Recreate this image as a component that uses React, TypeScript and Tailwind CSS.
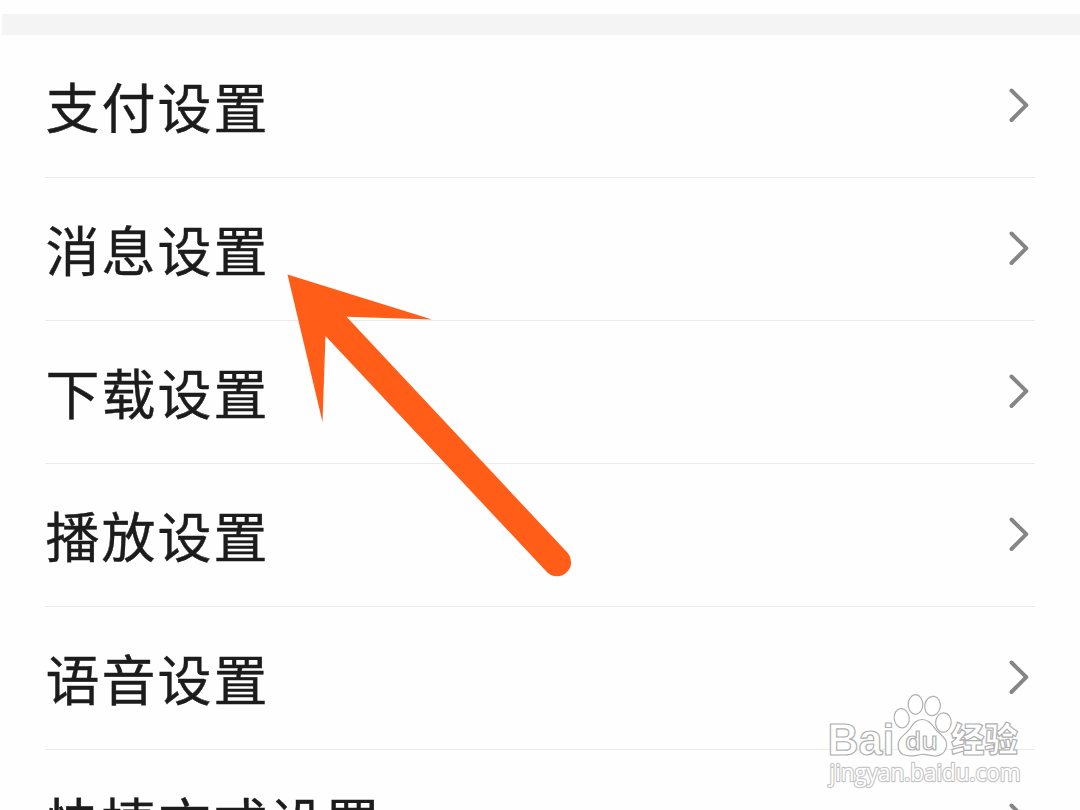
import type React from "react";

interface SettingItem {
  id: string;
  label: string;
}

const settings: SettingItem[] = [
  { id: "pay", label: "支付设置" },
  { id: "message", label: "消息设置" },
  { id: "download", label: "下载设置" },
  { id: "play", label: "播放设置" },
  { id: "voice", label: "语音设置" },
  { id: "shortcut", label: "快捷方式设置" },
];

const ChevronIcon: React.FC = () => (
  <svg
    className="w-6 h-10 mr-1 -mt-[3px] shrink-0"
    viewBox="0 0 24 40"
    fill="none"
    stroke="#858585"
    strokeWidth="4"
    strokeLinecap="round"
    strokeLinejoin="round"
  >
    <path d="M4.5 5.5L19.3 20.2L4.5 35" />
  </svg>
);

const SettingRow: React.FC<{ item: SettingItem }> = ({ item }) => (
  <li className="flex h-[143px] shrink-0 items-center justify-between border-b border-[#ebebeb]">
    <span className="pl-[0.5px] text-[54px] leading-[80px] tracking-[2px] text-[#1c1c1c] [-webkit-text-stroke:0.4px_#1c1c1c]">
      {item.label}
    </span>
    <ChevronIcon />
  </li>
);

const PointerArrow: React.FC = () => (
  <svg
    className="absolute left-[280px] top-[265px] w-[300px] h-[320px]"
    viewBox="280 265 300 320"
    fill="#ff5d18"
  >
    <path d="M287.5 274.5L432 319.5L346.5 316.8L568 553.2A14.2 14.2 0 0 1 547.6 572.8L325.5 336L322.5 422Z" />
  </svg>
);

const Watermark: React.FC = () => (
  <svg
    className="absolute left-[820px] top-[690px] w-[210px] h-[105px]"
    viewBox="820 690 210 105"
    fill="#fff"
    stroke="#b0b0b0"
    strokeWidth="1.2"
    strokeLinejoin="round"
  >
    {/* Paw */}
    <ellipse cx="901.7" cy="718.2" rx="7.5" ry="9.7" transform="rotate(-8 901.7 718.2)" />
    <ellipse cx="915.5" cy="704.5" rx="7.3" ry="9.8" />
    <ellipse cx="932.5" cy="706" rx="7.8" ry="9.7" transform="rotate(10 932.5 706)" />
    <ellipse cx="943.4" cy="722.5" rx="7.8" ry="9.7" transform="rotate(5 943.4 722.5)" />
    <path d="M922 719.5C930 719.5 933 727 937 731C942 736 947.5 739 946.5 746C945.5 753 940 756.5 934 756C929 755.5 926 754 921 754.5C915 755.5 909 757.5 903 754.5C897.5 751.5 897 743.5 900 739C903 735 907.5 732.5 910 728.5C913 724 916 719.5 922 719.5Z" />
    <text
      x="827.5"
      y="754.5"
      fontSize="45"
      fontWeight="700"
      textLength="67"
      lengthAdjust="spacingAndGlyphs"
      fontFamily="'Liberation Sans', sans-serif"
    >
      Bai
    </text>
    <text
      x="905"
      y="750"
      fontSize="26"
      fontWeight="600"
      textLength="33"
      lengthAdjust="spacingAndGlyphs"
      fontFamily="'Open Sans', sans-serif"
    >
      du
    </text>
    <text
      x="951"
      y="752"
      fontSize="34"
      fontWeight="900"
      textLength="67"
      lengthAdjust="spacingAndGlyphs"
      fontFamily="'Noto Sans CJK SC', sans-serif"
    >
      经验
    </text>
    <text
      x="829.5"
      y="780.5"
      fontSize="23"
      fontWeight="400"
      strokeWidth="2.4"
      stroke="#c6c6c6"
      textLength="191"
      lengthAdjust="spacingAndGlyphs"
      fontFamily="'Open Sans', sans-serif"
      style={{ paintOrder: "stroke" }}
    >
      jingyan.baidu.com
    </text>
  </svg>
);

const App: React.FC = () => {
  return (
    <div className="relative flex h-[810px] w-[1080px] flex-col overflow-hidden bg-[#fefefe] font-['Noto_Sans_CJK_SC',sans-serif]">
      <div className="ml-0.5 mt-3.5 h-[21px] shrink-0 bg-[#f4f4f4]" />
      <ul className="flex flex-col px-[45px]">
        {settings.map((item) => (
          <SettingRow key={item.id} item={item} />
        ))}
      </ul>
      <PointerArrow />
      <Watermark />
    </div>
  );
};

export default App;
